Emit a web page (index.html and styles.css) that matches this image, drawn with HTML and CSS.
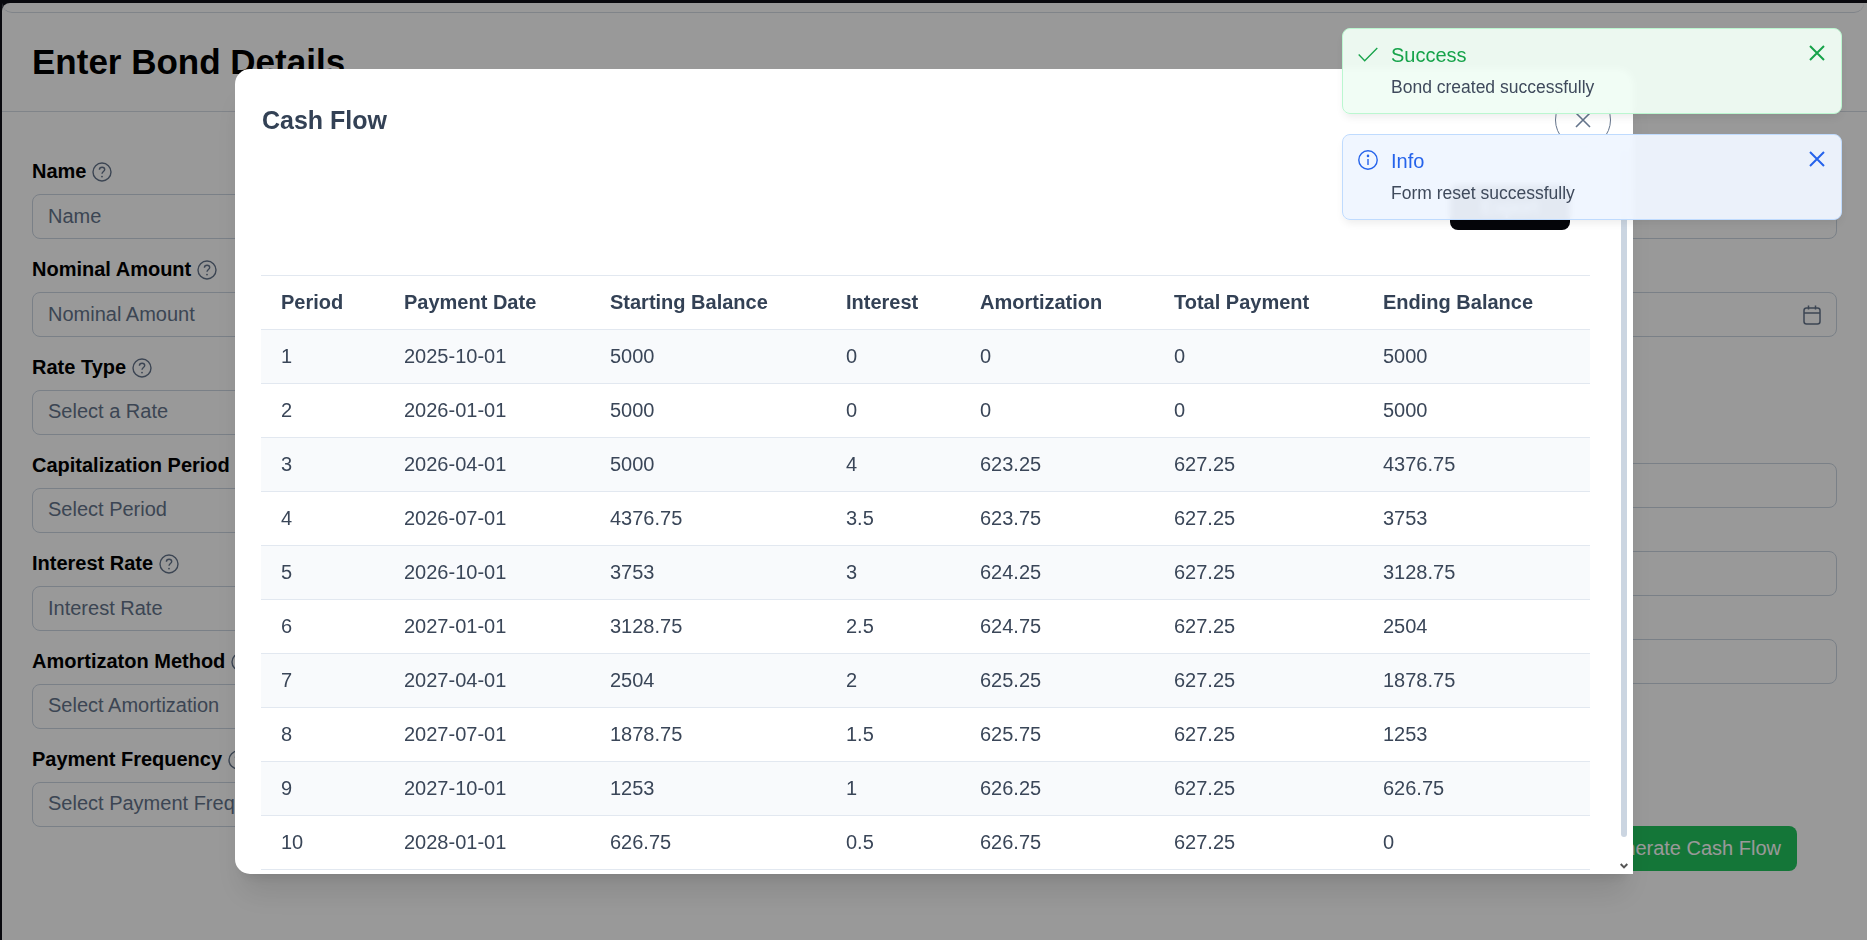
FILE: index.html
```html
<!DOCTYPE html>
<html>

<head>
    <title>Enter Bond Details</title>
    <link rel="stylesheet" href="styles.css">
</head>

<body>
    <svg class="icon-defs" aria-hidden="true">
        <symbol id="help" viewBox="0 0 20 20">
            <circle cx="10" cy="10" r="9" fill="none" stroke="currentColor" stroke-width="1.4" />
            <path d="M7.4 7.7c0-1.5 1.2-2.5 2.7-2.5s2.6 1 2.6 2.3c0 2-2.7 2.1-2.7 4.3" fill="none" stroke="currentColor" stroke-width="1.4" />
            <circle cx="10" cy="14.6" r="0.9" fill="currentColor" />
        </symbol>
    </svg>

    <div class="page">
        <div class="topbar"></div>
        <div class="page-header">
            <h1>Enter Bond Details</h1>
        </div>

        <form class="bond-form">
            <div class="column">
                <div class="field">
                    <label>Name <svg class="help"><use href="#help" /></svg></label>
                    <input class="input" placeholder="Name">
                </div>
                <div class="field">
                    <label>Nominal Amount <svg class="help"><use href="#help" /></svg></label>
                    <input class="input" placeholder="Nominal Amount">
                </div>
                <div class="field">
                    <label>Rate Type <svg class="help"><use href="#help" /></svg></label>
                    <div class="input select">Select a Rate</div>
                </div>
                <div class="field">
                    <label>Capitalization Period <svg class="help"><use href="#help" /></svg></label>
                    <div class="input select">Select Period</div>
                </div>
                <div class="field">
                    <label>Interest Rate <svg class="help"><use href="#help" /></svg></label>
                    <input class="input" placeholder="Interest Rate">
                </div>
                <div class="field">
                    <label>Amortizaton Method <svg class="help"><use href="#help" /></svg></label>
                    <div class="input select">Select Amortization</div>
                </div>
                <div class="field">
                    <label>Payment Frequency <svg class="help"><use href="#help" /></svg></label>
                    <div class="input select">Select Payment Frequency</div>
                </div>
            </div>

            <div class="column column-right">
                <div class="input first"></div>
                <div class="input date">
                    <svg class="calendar" viewBox="0 0 18 20" fill="none" stroke="currentColor" stroke-width="1.5">
                        <rect x="1" y="3" width="16" height="16" rx="2.5" />
                        <path d="M1 8h16M5.5 0.5v4M12.5 0.5v4" />
                    </svg>
                </div>
                <div class="input third"></div>
                <div class="input next"></div>
                <div class="input next"></div>
                <button type="button" class="generate-btn">Generate Cash Flow</button>
            </div>
        </form>
    </div>

    <div class="overlay">
        <div class="modal">
            <div class="modal-head">
                <h2>Cash Flow</h2>
                <button type="button" class="close-btn">
                    <svg viewBox="0 0 16 16" fill="none" stroke="currentColor" stroke-width="1.6">
                        <path d="M1 1l14 14M15 1L1 15" />
                    </svg>
                </button>
            </div>

            <div class="modal-actions">
                <button type="button" class="export-btn">Export</button>
            </div>

            <table class="flow-table">
                <colgroup>
                    <col class="col-period">
                    <col class="col-date">
                    <col class="col-start">
                    <col class="col-interest">
                    <col class="col-amort">
                    <col class="col-total">
                    <col class="col-end">
                </colgroup>
                <thead>
                    <tr>
                        <th>Period</th>
                        <th>Payment Date</th>
                        <th>Starting Balance</th>
                        <th>Interest</th>
                        <th>Amortization</th>
                        <th>Total Payment</th>
                        <th>Ending Balance</th>
                    </tr>
                </thead>
                <tbody>
                    <tr><td>1</td><td>2025-10-01</td><td>5000</td><td>0</td><td>0</td><td>0</td><td>5000</td></tr>
                    <tr><td>2</td><td>2026-01-01</td><td>5000</td><td>0</td><td>0</td><td>0</td><td>5000</td></tr>
                    <tr><td>3</td><td>2026-04-01</td><td>5000</td><td>4</td><td>623.25</td><td>627.25</td><td>4376.75</td></tr>
                    <tr><td>4</td><td>2026-07-01</td><td>4376.75</td><td>3.5</td><td>623.75</td><td>627.25</td><td>3753</td></tr>
                    <tr><td>5</td><td>2026-10-01</td><td>3753</td><td>3</td><td>624.25</td><td>627.25</td><td>3128.75</td></tr>
                    <tr><td>6</td><td>2027-01-01</td><td>3128.75</td><td>2.5</td><td>624.75</td><td>627.25</td><td>2504</td></tr>
                    <tr><td>7</td><td>2027-04-01</td><td>2504</td><td>2</td><td>625.25</td><td>627.25</td><td>1878.75</td></tr>
                    <tr><td>8</td><td>2027-07-01</td><td>1878.75</td><td>1.5</td><td>625.75</td><td>627.25</td><td>1253</td></tr>
                    <tr><td>9</td><td>2027-10-01</td><td>1253</td><td>1</td><td>626.25</td><td>627.25</td><td>626.75</td></tr>
                    <tr><td>10</td><td>2028-01-01</td><td>626.75</td><td>0.5</td><td>626.75</td><td>627.25</td><td>0</td></tr>
                </tbody>
            </table>

            <!-- scrollbar of the modal -->
            <div class="scroll-thumb"></div>
            <svg class="scroll-arrow" viewBox="0 0 8 6" fill="none" stroke="currentColor" stroke-width="2">
                <path d="M0.7 1l3.3 3.4L7.3 1" />
            </svg>
        </div>
    </div>

    <div class="toasts">
        <div class="toast toast-success">
            <svg class="toast-icon" viewBox="0 0 20 20" fill="none" stroke="currentColor" stroke-width="1.3">
                <path d="M0.7 9.5l6 6.3L19.3 3" />
            </svg>
            <div class="toast-text">
                <div class="toast-summary">Success</div>
                <div class="toast-detail">Bond created successfully</div>
            </div>
            <svg class="toast-close" viewBox="0 0 16 16" fill="none" stroke="currentColor" stroke-width="2">
                <path d="M1 1l14 14M15 1L1 15" />
            </svg>
        </div>
        <div class="toast toast-info">
            <svg class="toast-icon" viewBox="0 0 20 20" fill="none" stroke="currentColor" stroke-width="1.4">
                <circle cx="10" cy="10" r="9.2" />
                <path d="M10 9v6" />
                <circle cx="10" cy="5.9" r="0.6" />
            </svg>
            <div class="toast-text">
                <div class="toast-summary">Info</div>
                <div class="toast-detail">Form reset successfully</div>
            </div>
            <svg class="toast-close" viewBox="0 0 16 16" fill="none" stroke="currentColor" stroke-width="2">
                <path d="M1 1l14 14M15 1L1 15" />
            </svg>
        </div>
    </div>
</body>

</html>
```

FILE: styles.css
```css
html,
body {
    height: 100%;
    overflow: hidden;
}

body {
    margin: 0;
    background-color: #0f0f18;
    font-family: "Liberation Sans", Arial, sans-serif;
    color: #000;
}

.icon-defs {
    display: none;
}

.page {
    height: calc(100% - 3px);
    margin: 3px 0 0 2px;
    background-color: #fff;
    border-top-left-radius: 8px;
}

.topbar {
    height: 9px;
    margin-right: 3px;
    border-bottom: 1px solid #d6dce5;
    border-radius: 0 0 12px 12px;
}

.page-header {
    height: 99px;
    padding-left: 30px;
    box-sizing: border-box;
    border-bottom: 1px solid #d6dce5;
}

h1 {
    margin: 0;
    font-size: 35px;
    line-height: 98px;
    font-weight: bold;
}

.bond-form {
    display: grid;
    grid-template-columns: 1fr 1fr;
    gap: 30px;
    padding: 48px 30px 0;
}

.column {
    display: flex;
    flex-direction: column;
    gap: 19px;
}

.field label {
    display: flex;
    align-items: center;
    gap: 6px;
    height: 23px;
    margin-bottom: 11px;
    font-size: 20px;
    font-weight: bold;
    white-space: nowrap;
}

.help {
    width: 20px;
    height: 20px;
    color: #64748b;
}

.input {
    display: block;
    width: 100%;
    height: 45px;
    box-sizing: border-box;
    padding: 0 15px;
    border: 1px solid #cbd5e1;
    border-radius: 8px;
    background-color: #fff;
    font-family: inherit;
    font-size: 20px;
    line-height: 41px;
    color: #64748b;
    white-space: nowrap;
    overflow: hidden;
}

.input::placeholder {
    color: #64748b;
    opacity: 1;
}

.column-right {
    gap: 0;
    padding-top: 34px;
}

.date {
    display: flex;
    align-items: center;
    justify-content: flex-end;
    margin-top: 53px;
    padding-right: 15px;
}

.calendar {
    width: 18px;
    height: 20px;
    color: #64748b;
}

.third {
    margin-top: 126px;
}

.next {
    margin-top: 43px;
}

.generate-btn {
    align-self: flex-end;
    height: 45px;
    margin: 142px 40px 0 0;
    padding: 0 16px;
    border: none;
    border-radius: 8px;
    background-color: #22c55e;
    font-family: inherit;
    font-size: 20px;
    color: #fff;
}

.overlay {
    position: fixed;
    top: 0;
    right: 0;
    bottom: 0;
    left: 0;
    padding: 69px 0 0 235px;
    background-color: rgba(0, 0, 0, 0.4);
}

.modal {
    position: relative;
    width: 1398px;
    height: 805px;
    overflow: hidden;
    box-sizing: border-box;
    padding: 23px 43px 0 26px;
    border-radius: 15px 15px 0 15px;
    background-color: #fff;
    box-shadow: 0 25px 31px -6px rgba(0, 0, 0, 0.1), 0 10px 12px -7px rgba(0, 0, 0, 0.1);
}

.modal-head {
    display: flex;
    align-items: center;
    justify-content: space-between;
    margin-right: -21px;
}

h2 {
    margin: 0 0 0 1px;
    font-size: 25px;
    font-weight: bold;
    color: #334155;
}

.close-btn {
    display: flex;
    align-items: center;
    justify-content: center;
    width: 56px;
    height: 56px;
    padding: 0;
    border: 1px solid #64748b;
    border-radius: 50%;
    background: none;
    color: #64748b;
}

.close-btn svg {
    width: 16px;
    height: 16px;
}

.modal-actions {
    display: flex;
    justify-content: flex-end;
    margin: 37px 20px 45px 0;
}

.export-btn {
    width: 120px;
    height: 45px;
    border: none;
    border-radius: 8px;
    background-color: #05060a;
    font-family: inherit;
    font-size: 20px;
    color: #fff;
}

.flow-table {
    width: 1329px;
    table-layout: fixed;
    border-collapse: collapse;
    font-size: 20px;
    color: #3a4658;
}

.col-period { width: 123px; }
.col-date { width: 206px; }
.col-start { width: 236px; }
.col-interest { width: 134px; }
.col-amort { width: 194px; }
.col-total { width: 209px; }
.col-end { width: 227px; }

.flow-table th,
.flow-table td {
    height: 54px;
    box-sizing: border-box;
    padding: 0 20px 1px;
    border-top: 1px solid #e2e8f0;
    border-bottom: 1px solid #e2e8f0;
    text-align: left;
}

.flow-table th {
    font-weight: bold;
    color: #334155;
}

.flow-table tbody tr:nth-child(odd) {
    background-color: #f8fafc;
}

.scroll-thumb {
    position: absolute;
    top: 81px;
    right: 6px;
    bottom: 37px;
    width: 6px;
    border-radius: 0 0 3px 3px;
    background-color: #cbd5e1;
}

.scroll-arrow {
    position: absolute;
    right: 5px;
    bottom: 5px;
    width: 8px;
    height: 6px;
    color: #555;
}

.toasts {
    position: fixed;
    top: 28px;
    right: 25px;
    display: flex;
    flex-direction: column;
    gap: 20px;
    width: 500px;
}

.toast {
    display: flex;
    height: 86px;
    box-sizing: border-box;
    padding: 15px;
    border: 1px solid;
    border-radius: 8px;
    backdrop-filter: blur(3px);
    box-shadow: 0 5px 8px -2px rgba(0, 0, 0, 0.08);
}

.toast-success {
    background-color: rgba(240, 253, 244, 0.95);
    border-color: #bbf7d0;
    color: #16a34a;
}

.toast-info {
    background-color: rgba(239, 246, 255, 0.95);
    border-color: #bfdbfe;
    color: #2563eb;
}

.toast-icon {
    flex: none;
    width: 20px;
    height: 20px;
    margin: 1px 13px 0 0;
}

.toast-info .toast-icon {
    margin-top: 0;
}

.toast-text {
    flex: 1;
}

.toast-summary {
    font-size: 20px;
    line-height: 22px;
}

.toast-detail {
    margin-top: 11px;
    font-size: 17.5px;
    line-height: 21px;
    color: #3f4a5c;
}

.toast-close {
    flex: none;
    width: 16px;
    height: 16px;
    margin: 1px 1px 0 0;
}
```
